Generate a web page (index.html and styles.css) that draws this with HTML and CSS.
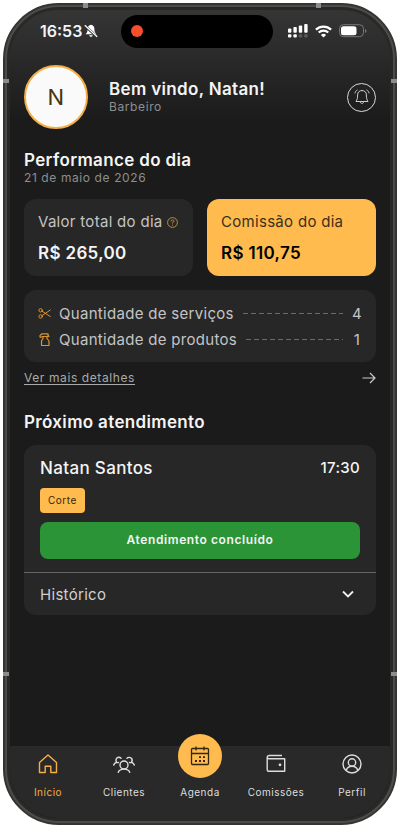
FILE: index.html
```html
<!DOCTYPE html>
<html lang="pt-BR">
<head>
<meta charset="utf-8">
<meta name="viewport" content="width=device-width, initial-scale=1">
<title>Início</title>
<link rel="stylesheet" href="styles.css">
</head>
<body>
<div class="phone">
  <i class="band band-tl"></i><i class="band band-tr"></i>
  <i class="band band-l1"></i><i class="band band-r1"></i>
  <i class="band band-l2"></i><i class="band band-r2"></i>
  <div class="screen">
    <div class="status">
      <div class="status-side">
        <span class="clock">16:53</span>
        <svg width="14" height="14" viewBox="0 0 14 14"><path d="M7 .8C4.600 1.200 3.600 3 3.600 5.200c0 2.600-.8 3.700-2 5h10.800c-1.200-1.300-2-2.400-2-5C10.400 3 9.400 1.200 7 .8zM5.300 11.200c.3 2 3.100 2 3.400 0z" fill="#fff"/><path d="M.8 1.800l12.400 11.200" stroke="#333" stroke-width="2.600"/><path d="M.8 1.200l12.400 11.600" stroke="#fff" stroke-width="1.200"/></svg>
      </div>
      <div class="island"><span class="rec"></span></div>
      <div class="status-side status-right">
        <svg width="20" height="14" viewBox="0 0 20 14" fill="#fff"><rect x="0" y="4.500" width="3.400" height="4.300" rx="1"/><rect x="5.400" y="3" width="3.400" height="5.800" rx="1"/><rect x="10.800" y="1.500" width="3.400" height="7.300" rx="1"/><rect x="16.200" y="0" width="3.400" height="8.800" rx="1"/><rect x="0" y="10.300" width="3.400" height="3.200" rx="1"/><rect x="5.400" y="10.300" width="3.400" height="3.200" rx="1"/><g fill="#5c5c5c"><rect x="10.800" y="10.300" width="3.400" height="3.200" rx="1"/><rect x="16.200" y="10.300" width="3.400" height="3.200" rx="1"/></g></svg>
        <svg width="17" height="13" viewBox="0 0 17 13" fill="none" stroke="#fff" stroke-width="2.200"><path d="M.9 4.600a11 11 0 0 1 15.200 0M3.700 7.500a7 7 0 0 1 9.600 0"/><path d="M8.500 12.500L5.900 9.900a3.800 3.800 0 0 1 5.200 0z" fill="#fff" stroke="none"/></svg>
        <svg width="28" height="14" viewBox="0 0 28 14"><rect x=".5" y=".7" width="24" height="12" rx="4" fill="none" stroke="#777"/><rect x="2" y="2.200" width="15.500" height="9" rx="2.500" fill="#fff"/><path d="M26 5v4q1.500-.5 1.500-2T26 5z" fill="#777"/></svg>
      </div>
    </div>

    <main class="content">
      <header class="profile">
        <div class="avatar">N</div>
        <div class="greeting">
          <h1>Bem vindo, Natan!</h1>
          <p class="muted">Barbeiro</p>
        </div>
        <button class="bell" type="button" aria-label="Notificações">
          <svg width="16" height="16" viewBox="0 0 16 16" fill="none" stroke="currentColor" stroke-linecap="round" stroke-linejoin="round"><path d="M8 1.500C5.300 1.500 3.600 3.300 3.600 6c0 3.200-.4 4.600-1.600 6.500h12c-1.200-1.900-1.600-3.300-1.600-6.500 0-2.700-1.700-4.500-4.400-4.500zM6.200 12.500c0 2.700 3.600 2.700 3.600 0M3.200 1C2 1.700 1.300 2.600 1 4M12.800 1c1.200.7 1.900 1.600 2.200 3"/></svg>
        </button>
      </header>

      <section>
        <h2>Performance do dia</h2>
        <p class="muted">21 de maio de 2026</p>
        <div class="totals">
          <div class="card total">
            <p class="label">Valor total do dia <svg width="11" height="11" viewBox="0 0 11 11" fill="none" stroke="#c58b35"><circle cx="5.500" cy="5.500" r="4.900"/><path d="M4 4.500q0-1.500 1.500-1.500T7 4.300Q7 5 5.500 5.700v.8M5.500 7.600v1"/></svg></p>
            <p class="amount">R$ 265,00</p>
          </div>
          <div class="card total accent">
            <p class="label">Comissão do dia</p>
            <p class="amount">R$ 110,75</p>
          </div>
        </div>
        <div class="card counts">
          <div class="count">
            <svg width="13" height="13" viewBox="0 0 13 13" fill="none" stroke="#d9942f" stroke-linecap="round"><circle cx="2.600" cy="3.300" r="1.700"/><circle cx="2.600" cy="9.500" r="1.700"/><path d="M4.200 4.300l8.100 5.200M4.200 8.500l8.100-5.500"/></svg>
            <span>Quantidade de serviços</span><i class="dash"></i><span class="number">4</span>
          </div>
          <div class="count">
            <svg width="13" height="13" viewBox="0 0 13 13" fill="none" stroke="#d9942f" stroke-width="1.200" stroke-linejoin="round"><path d="M2 4.500V2.500L4 .8h6v2.700H4.500L2 4.500M5 3.500v2L3.500 8v4.500H11V8L9 5.500v-2M10 1.500l1 2.500"/></svg>
            <span>Quantidade de produtos</span><i class="dash"></i><span class="number">1</span>
          </div>
        </div>
        <a class="more" href="#detalhes"><span>Ver mais detalhes</span>
          <svg width="14" height="12" viewBox="0 0 14 12" fill="none" stroke="currentColor" stroke-width="1.200"><path d="M.5 6h12M8 1l5 5-5 5"/></svg>
        </a>
      </section>

      <section class="next">
        <h2>Próximo atendimento</h2>
        <article class="card appointment">
          <div class="booking">
            <div class="client"><h3>Natan Santos</h3><time>17:30</time></div>
            <span class="tag">Corte</span>
            <button class="done" type="button">Atendimento concluído</button>
          </div>
          <button class="history" type="button"><span>Histórico</span>
            <svg width="12" height="8" viewBox="0 0 12 8" fill="none" stroke="#eee" stroke-width="1.800"><path d="M1 1.500l5 5 5-5"/></svg>
          </button>
        </article>
      </section>
    </main>

    <nav class="tabs">
      <a class="tab active" href="#inicio"><svg width="20" height="20" viewBox="0 0 20 20" fill="none" stroke="currentColor" stroke-width="1.400" stroke-linejoin="round"><path d="M1.500 8.500L10 1l8.500 7.500v10h-5.700v-6.300H7.200v6.300H1.500z"/></svg><span>Início</span></a>
      <a class="tab" href="#clientes"><svg width="22" height="20" viewBox="0 0 22 20" fill="none" stroke="currentColor" stroke-width="1.400" stroke-linecap="round"><circle cx="11" cy="11" r="4"/><path d="M5.300 18.300c1.300-4.200 10.100-4.200 11.400 0M8 4.300a2.900 2.900 0 1 0-4.300 3.900C2.200 8.600 1.200 9.500.7 11M14 4.300a2.900 2.900 0 1 1 4.300 3.900c1.500.4 2.500 1.300 3 2.800M3.700 8.200q.8.600 1.800.3M18.300 8.200q-.8.600-1.800.3"/></svg><span>Clientes</span></a>
      <a class="tab agenda" href="#agenda"><span class="fab"><svg width="20" height="20" viewBox="0 0 20 20" fill="none" stroke="#332711" stroke-width="1.300"><rect x="1.500" y="2.500" width="17" height="16" rx="1"/><path d="M1.500 7.500h17M6 .5v4M14 .5v4"/><path d="M9 11.200h2M13 11.200h2M5 15h2M9 15h2M13 15h2" stroke-width="1.800"/></svg></span><span>Agenda</span></a>
      <a class="tab" href="#comissoes"><svg width="20" height="20" viewBox="0 0 20 20" fill="none" stroke="currentColor" stroke-width="1.400" stroke-linejoin="round"><path d="M16 1.500H3.200Q1.200 1.700 1.200 3.200v12.600q0 1.500 1.500 1.500h16V4.700H3Q1.200 4.700 1.200 3.200"/><circle cx="14" cy="10.800" r=".7" fill="currentColor"/></svg><span>Comissões</span></a>
      <a class="tab" href="#perfil"><svg width="20" height="20" viewBox="0 0 20 20" fill="none" stroke="currentColor" stroke-width="1.400"><circle cx="10" cy="10" r="9"/><circle cx="10" cy="8.500" r="3.700"/><path d="M4.200 16.500c1.500-5.600 10.100-5.600 11.600 0"/></svg><span>Perfil</span></a>
    </nav>
  </div>
</div>
</body>
</html>
```
FILE: styles.css
```css
* { box-sizing: border-box; margin: 0; padding: 0; }
body {
  background: #fff;
  color: #f4f4f4;
  font-family: Inter, "Liberation Sans", sans-serif;
  padding: 3px 3px 0;
}
svg { display: block; flex: none; }
button { border: 0; background: none; color: inherit; font: inherit; cursor: pointer; }
a { color: inherit; text-decoration: none; }

.phone {
  position: relative;
  min-height: calc(100vh - 3px);
  display: flex;
  border-radius: 56px;
  border: 2px solid #343432;
  background: #4d4c49;
  padding: 2px;
}
.screen {
  flex: 1;
  min-width: 0;
  display: flex;
  flex-direction: column;
  border-radius: 52px;
  border: 3px solid #292929;
  background: linear-gradient(#353535, #1b1b1b 110px);
  overflow: hidden;
}
.band { position: absolute; background: #8c8c8b; width: 6px; height: 4px; }
.band-tl, .band-tr { top: -2px; width: 5px; height: 5px; }
.band-tl { left: 78px; }
.band-tr { right: 74px; }
.band-l1, .band-r1 { top: 74px; }
.band-l2, .band-r2 { top: 667px; }
.band-l1, .band-l2 { left: -2px; }
.band-r1, .band-r2 { right: -2px; }

.status { display: flex; align-items: center; padding: 2px 23px 0 30px; height: 40px; }
.status-side { display: flex; align-items: center; gap: 2px; width: 81px; }
.status-right { flex: 1; justify-content: flex-end; gap: 7px; }
.clock { font-size: 16px; font-weight: 600; }
.island { width: 152px; height: 33px; border-radius: 17px; background: #000; display: flex; align-items: center; padding-left: 10px; }
.rec { width: 12px; height: 12px; border-radius: 50%; background: #f4502e; }

.content { flex: 1; padding: 15px 14px 0; letter-spacing: 0.02em; }
.profile { display: flex; align-items: center; }
.avatar { width: 64px; height: 64px; border-radius: 50%; border: 2px solid #f5ae48; background: #fafafa; color: #4b3510; font-size: 22px; display: flex; align-items: center; justify-content: center; }
.greeting { flex: 1; padding-left: 21px; }
h1, h2, h3 { font-size: 17px; line-height: 20px; font-weight: 600; letter-spacing: 0.02em; }
.muted, .more { font-size: 12px; line-height: 16px; letter-spacing: 0.05em; }
.muted { color: #8e8e8e; }
.bell { width: 29px; height: 29px; border: 1px solid #d8d8d8; border-radius: 50%; color: #ccc; display: flex; align-items: center; justify-content: center; }
section { padding-top: 21px; }

.card { background: #272727; border-radius: 12px; }
.totals { display: grid; grid-template-columns: 1fr 1fr; gap: 14px; margin-top: 13px; }
.total { padding: 14px; height: 77px; display: flex; flex-direction: column; justify-content: space-between; white-space: nowrap; }
.label { display: flex; align-items: center; gap: 4px; font-size: 15px; line-height: 18px; color: #c4c4c4; letter-spacing: 0.02em; }
.amount { font-size: 17px; line-height: 18px; font-weight: 600; letter-spacing: 0.02em; }
.accent { background: #ffbb4e; }
.accent .label { color: #3d2f1a; }
.accent .amount { color: #000; }
.counts { margin-top: 14px; padding: 10px 14px; font-size: 15px; color: #c4c4c4; letter-spacing: 0.02em; }
.count { display: flex; align-items: center; height: 26px; gap: 8px; }
.number { min-width: 10px; text-align: center; }
.dash { flex: 1; height: 1px; margin: 0 1px; background: repeating-linear-gradient(90deg, #6a6a6a 0 5px, transparent 5px 8px); }
.more { display: flex; justify-content: space-between; align-items: center; color: #aaa; margin-top: 8px; }
.more span { text-decoration: underline; text-underline-offset: 2px; }
.more svg { color: #ccc; }

.next { padding-top: 26px; }
.appointment { margin-top: 13px; overflow: hidden; }
.booking { padding: 13px 16px; display: flex; flex-direction: column; align-items: flex-start; }
.client { align-self: stretch; display: flex; justify-content: space-between; align-items: center; }
h3 { font-weight: 500; }
time { font-size: 15px; line-height: 20px; font-weight: 500; letter-spacing: 0.02em; }
.tag { margin-top: 10px; padding: 0 8px; font-size: 10px; line-height: 25px; letter-spacing: 0.05em; border-radius: 4px; background: #ffbb4e; color: #33260f; }
.done { align-self: stretch; margin-top: 9px; height: 37px; padding-bottom: 2px; border-radius: 8px; background: #2a9437; font-size: 12px; font-weight: 600; letter-spacing: 0.05em; }
.history { width: 100%; height: 43px; padding: 0 22px 0 16px; border-top: 1px solid #666; display: flex; align-items: center; justify-content: space-between; font-size: 15px; letter-spacing: 0.02em; color: #d0d0d0; }

.tabs { display: grid; grid-template-columns: repeat(5, 1fr); height: 72px; background: #292929; }
.tab { display: flex; flex-direction: column; align-items: center; padding-top: 8px; gap: 11px; font-size: 10px; line-height: 14px; letter-spacing: 0.05em; color: #dedede; }
.active { color: #f5ae48; }
.fab { width: 44px; height: 44px; margin-top: -20px; border-radius: 50%; background: #ffbb4e; display: flex; align-items: center; justify-content: center; }
.agenda { gap: 7px; }
```
